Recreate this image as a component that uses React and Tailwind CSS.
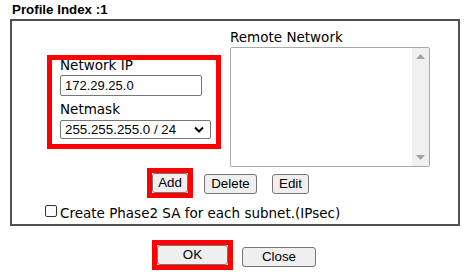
import React from "react";

const btn =
  "h-[20px] bg-[#efefef] border border-[#767676] rounded-[3px] text-[13.33px] leading-[18px] text-black flex items-center justify-center font-['Liberation_Sans',Arial,sans-serif]";

export default function App() {
  return (
    <div className="w-[476px] h-[278px] bg-white text-black font-['DejaVu_Sans',Verdana,sans-serif] overflow-hidden">
      <div className="pl-[12px] pt-[2px] text-[13.33px] leading-[16px] font-bold font-['Liberation_Sans',Arial,sans-serif]">
        Profile Index :1
      </div>
      <div className="ml-[10px] mt-[1px] w-[450px] h-[207px] border-2 border-[#505050] flex flex-col">
        <div className="flex items-start">
          <div className="ml-[35px] mt-[34px] w-[174px] h-[94px] border-[5px] border-[#ff0000] pl-[8px] flex flex-col">
            <div className="-mt-[2px] text-[13.5px] leading-[14px]">Network IP</div>
            <div className="mt-[3px] w-[142px] h-[21px] border border-[#767676] rounded-[2px] pl-[4px] flex items-center text-[13px] font-['Liberation_Sans',Arial,sans-serif]">
              172.29.25.0
            </div>
            <div className="mt-[6px] text-[13.5px] leading-[14px]">Netmask</div>
            <div className="mt-[4px] w-[151px] h-[19px] border border-[#767676] rounded-[2px] pl-[4px] pr-[6px] flex items-center justify-between text-[13.33px] font-['Liberation_Sans',Arial,sans-serif]">
              <span>255.255.255.0 / 24</span>
              <svg width="10" height="7" viewBox="0 0 10 7">
                <path d="M1 1.5 L5 5.5 L9 1.5" fill="none" stroke="#000" strokeWidth="2" />
              </svg>
            </div>
          </div>
          <div className="ml-[9px] mt-[9px] flex flex-col">
            <div className="text-[13.5px] leading-[14px]">Remote Network</div>
            <div className="mt-[3px] w-[200px] h-[120px] border border-[#a9a9a9] rounded-[2px] flex justify-end">
              <div className="w-[17px] h-full bg-[#f0f0f0] flex flex-col items-center justify-between py-[6px]">
                <svg width="9" height="5" viewBox="0 0 9 5">
                  <path d="M0 5 L4.5 0 L9 5 Z" fill="#a3a3a3" />
                </svg>
                <svg width="9" height="5" viewBox="0 0 9 5">
                  <path d="M0 0 L4.5 5 L9 0 Z" fill="#a3a3a3" />
                </svg>
              </div>
            </div>
          </div>
        </div>
        <div className="flex items-center ml-[135px] mt-[1px]">
          <div className="border-[5px] border-[#ff0000] flex">
            <div className={`${btn} w-[36px]`}>Add</div>
          </div>
          <div className={`${btn} w-[53px] ml-[11px] mt-[2px]`}>Delete</div>
          <div className={`${btn} w-[37px] ml-[15px] mt-[2px]`}>Edit</div>
        </div>
        <div className="flex items-start ml-[33px] mt-[8px]">
          <div className="w-[12px] h-[12px] mt-[-1px] border border-[#333] rounded-[2px] bg-white" />
          <div className="ml-[3px] text-[13.5px] leading-[14px]">Create Phase2 SA for each subnet.(IPsec)</div>
        </div>
      </div>
      <div className="flex items-start ml-[152px] mt-[14px]">
        <div className="border-[5px] border-[#ff0000] flex">
          <div className={`${btn} w-[71px]`}>OK</div>
        </div>
        <div className={`${btn} w-[74px] ml-[9px] mt-[7px]`}>Close</div>
      </div>
    </div>
  );
}
